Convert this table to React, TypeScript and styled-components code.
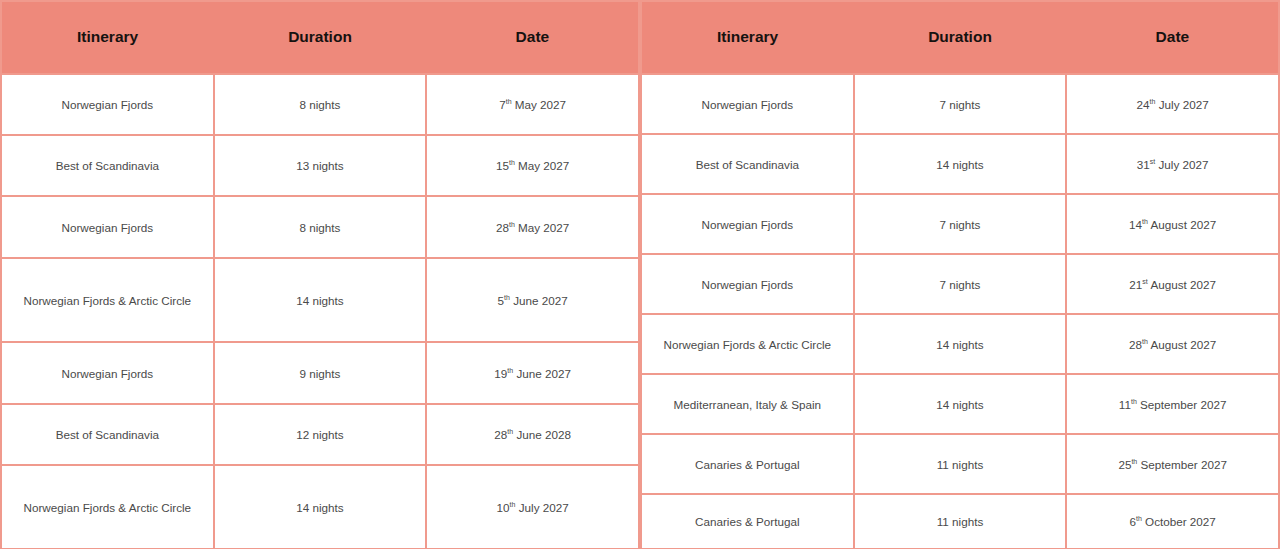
import styled, { createGlobalStyle } from 'styled-components'
import { FC } from 'react'

type TCruise = {
  itinerary: string
  nights: number
  day: number
  suffix: string
  rest: string
  height: number
}

const left: TCruise[] = [
  { itinerary: 'Norwegian Fjords', nights: 8, day: 7, suffix: 'th', rest: 'May 2027', height: 61 },
  { itinerary: 'Best of Scandinavia', nights: 13, day: 15, suffix: 'th', rest: 'May 2027', height: 61 },
  { itinerary: 'Norwegian Fjords', nights: 8, day: 28, suffix: 'th', rest: 'May 2027', height: 62 },
  { itinerary: 'Norwegian Fjords & Arctic Circle', nights: 14, day: 5, suffix: 'th', rest: 'June 2027', height: 84 },
  { itinerary: 'Norwegian Fjords', nights: 9, day: 19, suffix: 'th', rest: 'June 2027', height: 62 },
  { itinerary: 'Best of Scandinavia', nights: 12, day: 28, suffix: 'th', rest: 'June 2028', height: 61 },
  { itinerary: 'Norwegian Fjords & Arctic Circle', nights: 14, day: 10, suffix: 'th', rest: 'July 2027', height: 84 },
]

const right: TCruise[] = [
  { itinerary: 'Norwegian Fjords', nights: 7, day: 24, suffix: 'th', rest: 'July 2027', height: 60 },
  { itinerary: 'Best of Scandinavia', nights: 14, day: 31, suffix: 'st', rest: 'July 2027', height: 60 },
  { itinerary: 'Norwegian Fjords', nights: 7, day: 14, suffix: 'th', rest: 'August 2027', height: 60 },
  { itinerary: 'Norwegian Fjords', nights: 7, day: 21, suffix: 'st', rest: 'August 2027', height: 60 },
  { itinerary: 'Norwegian Fjords & Arctic Circle', nights: 14, day: 28, suffix: 'th', rest: 'August 2027', height: 60 },
  { itinerary: 'Mediterranean, Italy & Spain', nights: 14, day: 11, suffix: 'th', rest: 'September 2027', height: 60 },
  { itinerary: 'Canaries & Portugal', nights: 11, day: 25, suffix: 'th', rest: 'September 2027', height: 60 },
  { itinerary: 'Canaries & Portugal', nights: 11, day: 6, suffix: 'th', rest: 'October 2027', height: 55 },
]

const CruiseTable: FC<{ rows: TCruise[] }> = ({ rows }) => (
  <Table>
    <thead>
      <tr>
        <Th>Itinerary</Th>
        <Th>Duration</Th>
        <Th>Date</Th>
      </tr>
    </thead>
    <tbody>
      {rows.map((r, i) => (
        <Row key={i} $h={r.height}>
          <Td>{r.itinerary}</Td>
          <Td>{r.nights} nights</Td>
          <Td>
            {r.day}
            <Sup>{r.suffix}</Sup> {r.rest}
          </Td>
        </Row>
      ))}
    </tbody>
  </Table>
)

export default function App() {
  return (
    <>
      <GlobalStyle />
      <Page>
        <CruiseTable rows={left} />
        <CruiseTable rows={right} />
      </Page>
    </>
  )
}

const GlobalStyle = createGlobalStyle`
  body {
    margin: 0;
    background: #fff;
    font-family: "Liberation Sans", Arial, sans-serif;
  }
`
const Page = styled.div`
  display: flex;
  width: 1280px;
  height: 549px;
  overflow: hidden;
`
const Table = styled.table`
  width: 640px;
  flex: 0 0 640px;
  table-layout: fixed;
  border-collapse: collapse;
  border: 2px solid #f09a8d;
  align-self: flex-start;
`
const Th = styled.th`
  height: 69px;
  background: #ee897b;
  color: #161210;
  font-size: 15.5px;
  font-weight: 700;
  text-align: center;
  border: 1px solid #ee897b;
  padding: 0 0 2px;
  vertical-align: middle;
`
const Row = styled.tr<{ $h: number }>`
  height: ${(p) => p.$h}px;
`
const Td = styled.td`
  border: 2px solid #f09a8d;
  text-align: center;
  vertical-align: middle;
  font-size: 11.7px;
  color: #4a4a4a;
  padding: 0 4px;
`
const Sup = styled.sup`
  font-size: 7px;
  vertical-align: 5px;
  line-height: 0;
`
